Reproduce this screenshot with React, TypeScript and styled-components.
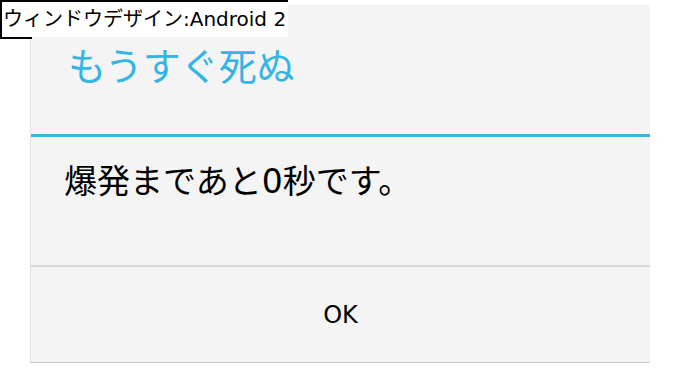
import React, { FC } from 'react';
import styled, { createGlobalStyle } from 'styled-components';

const GlobalStyle = createGlobalStyle`
  html, body {
    margin: 0;
    padding: 0;
    background: #ffffff;
  }
  body {
    font-family: 'DejaVu Sans', 'Noto Sans CJK JP', sans-serif;
    color: #000000;
  }
`;

// @ Window design sample: Android style alert
const App: FC = () => {
  return (
    <>
      <GlobalStyle />
      <Stage>
        <Dialog>
          <TitleBar>もうすぐ死ぬ</TitleBar>
          <Message>爆発まであと0秒です。</Message>
          <ButtonRow>
            <DialogButton type="button">OK</DialogButton>
          </ButtonRow>
        </Dialog>
        <Caption>ウィンドウデザイン:Android 2</Caption>
      </Stage>
    </>
  );
};

// @ styles

const Stage = styled.div`
  position: relative;
  width: 680px;
  height: 368px;
  padding: 5px 30px 5px 30px;
  box-sizing: border-box;
`;

const Dialog = styled.div`
  display: flex;
  flex-direction: column;
  height: 100%;
  background: #f4f4f4;
  border-top: 1px solid #ececec;
  border-left: 1px solid #e2e2e2;
  border-bottom: 1px solid #c8c8c8;
  box-sizing: border-box;
`;

const TitleBar = styled.div`
  height: 131px;
  display: flex;
  align-items: center;
  padding: 0 0 14px 37px;
  font-size: 38px;
  color: #33b5e5;
  border-bottom: 3px solid #33b5e5;
  box-sizing: border-box;
  flex-shrink: 0;
`;

const Message = styled.div`
  height: 130px;
  padding: 25px 0 0 33px;
  font-size: 33px;
  line-height: 40px;
  border-bottom: 2px solid #d8d8d8;
  box-sizing: border-box;
  flex-shrink: 0;
`;

const ButtonRow = styled.div`
  flex: 1;
  display: flex;
`;

const DialogButton = styled.button`
  flex: 1;
  border: none;
  background: transparent;
  font-family: 'DejaVu Sans', 'Noto Sans CJK JP', sans-serif;
  font-size: 24px;
  color: #000000;
  padding: 0;
  cursor: pointer;
`;

const Caption = styled.span`
  position: absolute;
  left: 0;
  top: 0;
  padding: 0 2px 0 1px;
  height: 35px;
  line-height: 35px;
  font-size: 20px;
  background: #ffffff;
  border-top: 2px solid #000000;
  border-left: 2px solid #000000;
  white-space: nowrap;
  &::after {
    content: '';
    position: absolute;
    left: -2px;
    bottom: -2px;
    width: 32px;
    height: 2px;
    background: #000000;
  }
`;

export default App;
